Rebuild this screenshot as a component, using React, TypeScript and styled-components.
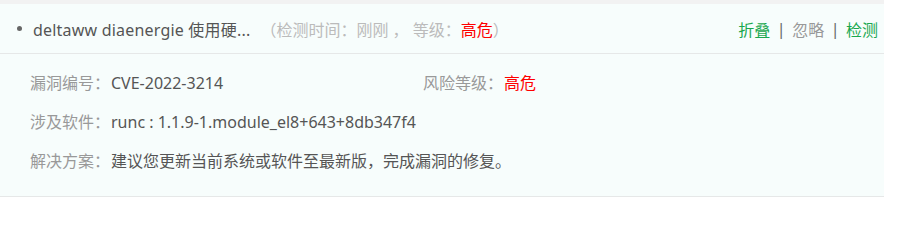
import React from 'react';
import styled, { createGlobalStyle } from 'styled-components';

const GlobalStyle = createGlobalStyle`
    html, body {
        margin: 0;
        padding: 0;
        background: #ffffff;
    }
    body {
        font-family: 'Noto Sans', 'Noto Sans CJK SC', sans-serif;
        font-size: 16px;
    }
`;

const Page = styled.div`
    width: 884px;
    padding-top: 4px;
    background: #f2f2f2;
`;

const Panel = styled.div`
    background: #f7fdfc;
    border-bottom: 1px solid #e6e8e8;
`;

const Header = styled.div`
    display: flex;
    align-items: center;
    justify-content: space-between;
    height: 49px;
    padding: 0 6px 0 17px;
    border-bottom: 1px solid #e6e8e8;
`;

const Title = styled.div`
    display: flex;
    align-items: center;
    color: #555;
    white-space: nowrap;

    &::before {
        content: '';
        width: 5px;
        height: 5px;
        border-radius: 50%;
        background: #666;
        margin-right: 11px;
    }
`;

const Name = styled.span`
    letter-spacing: 0.2px;
`;

const Meta = styled.span`
    color: #bbb;
    margin-left: 10px;
`;

const Danger = styled.span`
    color: #ff0000;
`;

const Actions = styled.div`
    display: flex;
    align-items: center;
    gap: 6.5px;
`;

const Action = styled.span<{ $tone: 'green' | 'gray' }>`
    color: ${(p) => (p.$tone === 'green' ? '#1aa84f' : '#999')};
    cursor: pointer;
`;

const Sep = styled.span`
    color: #666;
`;

const Details = styled.div`
    display: grid;
    grid-template-columns: 393px 1fr;
    row-gap: 17px;
    padding: 18px 30px 24px;
`;

const Field = styled.div<{ $wide?: boolean }>`
    display: flex;
    line-height: 22px;
    grid-column: ${(p) => (p.$wide ? '1 / -1' : 'auto')};
`;

const Label = styled.span`
    color: #999;
    width: 81px;
    flex-shrink: 0;
`;

const Value = styled.span`
    color: #555;
`;

export default function App() {
    return (
        <>
            <GlobalStyle />
            <Page>
                <Panel>
                    <Header>
                        <Title>
                            <Name>deltaww diaenergie 使用硬...</Name>
                            <Meta>
                                （检测时间：刚刚 ， 等级：<Danger>高危</Danger>）
                            </Meta>
                        </Title>
                        <Actions>
                            <Action $tone="green">折叠</Action>
                            <Sep>|</Sep>
                            <Action $tone="gray">忽略</Action>
                            <Sep>|</Sep>
                            <Action $tone="green">检测</Action>
                        </Actions>
                    </Header>
                    <Details>
                        <Field>
                            <Label>漏洞编号：</Label>
                            <Value>CVE-2022-3214</Value>
                        </Field>
                        <Field>
                            <Label>风险等级：</Label>
                            <Danger>高危</Danger>
                        </Field>
                        <Field $wide>
                            <Label>涉及软件：</Label>
                            <Value>runc : 1.1.9-1.module_el8+643+8db347f4</Value>
                        </Field>
                        <Field $wide>
                            <Label>解决方案：</Label>
                            <Value>建议您更新当前系统或软件至最新版，完成漏洞的修复。</Value>
                        </Field>
                    </Details>
                </Panel>
            </Page>
        </>
    );
}
